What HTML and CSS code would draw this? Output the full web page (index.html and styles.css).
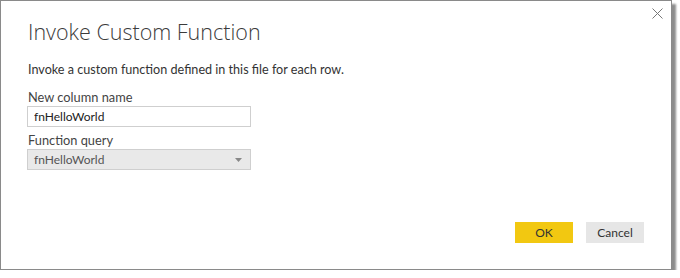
FILE: index.html
```html
<!DOCTYPE html>
<html lang="en">
<head>
    <meta charset="UTF-8">
    <title>Invoke Custom Function</title>
    <link rel="stylesheet" href="styles.css">
</head>
<body>
    <div class="dialog">
        <button class="close-btn" aria-label="Close">
            <svg width="11" height="11" viewBox="0 0 11 11">
                <path d="M0.5 0.5 L10.5 10.5 M10.5 0.5 L0.5 10.5" stroke="#777" stroke-width="1" fill="none"/>
            </svg>
        </button>

        <h1>Invoke Custom Function</h1>
        <p class="intro">Invoke a custom function defined in this file for each row.</p>

        <div class="form-group">
            <label for="columnName">New column name</label>
            <input type="text" id="columnName" value="fnHelloWorld">
        </div>

        <div class="form-group">
            <label for="functionQuery">Function query</label>
            <div class="select" id="functionQuery">
                <span>fnHelloWorld</span>
                <svg width="7" height="4" viewBox="0 0 7 4">
                    <path d="M0 0 H7 L3.5 4 Z" fill="#888"/>
                </svg>
            </div>
        </div>

        <div class="button-group">
            <button class="ok">OK</button>
            <button class="cancel">Cancel</button>
        </div>
    </div>
</body>
</html>
```

FILE: styles.css
```css
body {
    margin: 0;
    background-color: #fff;
    font-family: Lato, "Open Sans", Arial, sans-serif;
    color: #333;
}

.dialog {
    position: relative;
    box-sizing: border-box;
    width: 672px;
    height: 270px;
    border: 1px solid #8a8a8a;
    background-color: #fff;
    box-shadow: 4px 4px 2px rgba(0, 0, 0, 0.45);
    padding: 16px 26px 0 26px;
    display: flex;
    flex-direction: column;
}

.close-btn {
    position: absolute;
    top: 6px;
    right: 8px;
    border: none;
    background: none;
    padding: 0;
    cursor: pointer;
}

h1 {
    margin: 0;
    font-family: "Open Sans", Arial, sans-serif;
    font-size: 21.5px;
    font-weight: 300;
    color: #3b3b3b;
    line-height: 30px;
    padding-left: 1px;
}

.intro {
    margin: 14px 0 11px 1px;
    font-size: 12.6px;
    line-height: 17px;
    color: #333;
}

.form-group {
    display: flex;
    flex-direction: column;
    margin-bottom: 5px;
}

.form-group label {
    font-size: 12.8px;
    line-height: 16px;
    color: #444;
    margin: 0 0 1px 1px;
}

.form-group input[type="text"],
.select {
    box-sizing: border-box;
    width: 224px;
    height: 21px;
    border: 1px solid #cfcfcf;
    font-family: inherit;
    font-size: 12px;
    padding: 0 6px;
    color: #222;
}

.select {
    display: flex;
    align-items: center;
    justify-content: space-between;
    background-color: #e9e9e9;
    color: #555;
    padding-right: 8px;
}

.button-group {
    margin-top: auto;
    margin-bottom: 26px;
    display: flex;
    justify-content: flex-end;
    gap: 13px;
    padding-right: 1px;
}

.button-group button {
    width: 58px;
    height: 21px;
    border: none;
    font-family: inherit;
    font-size: 12px;
    color: #333;
    cursor: pointer;
}

.button-group .ok {
    background-color: #f2c811;
}

.button-group .cancel {
    background-color: #e6e6e6;
}
```
